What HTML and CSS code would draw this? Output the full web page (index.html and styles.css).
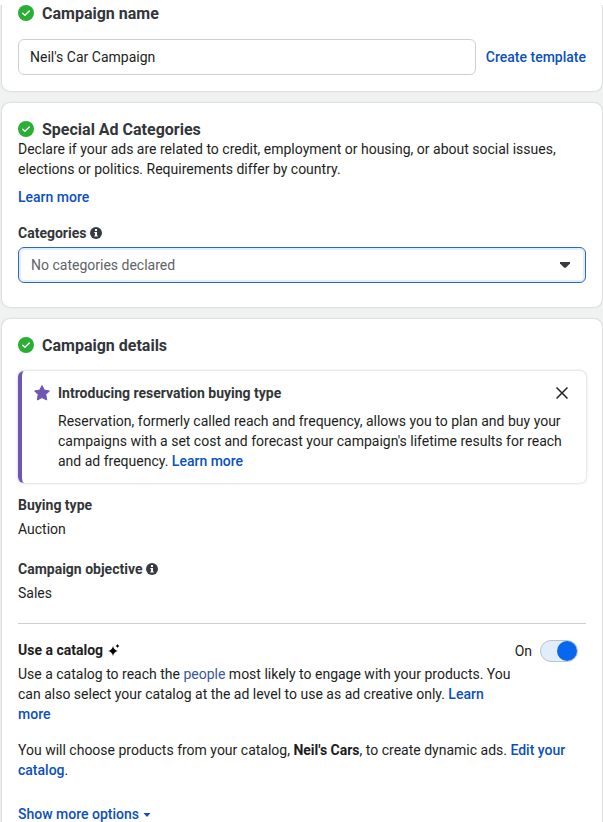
FILE: index.html
```html
<!DOCTYPE html>
<html lang="en">
<head>
<meta charset="utf-8">
<meta name="viewport" content="width=device-width, initial-scale=1">
<title>Campaign setup</title>
<link rel="stylesheet" href="styles.css">
</head>
<body>
<svg class="sprite" aria-hidden="true">
  <symbol id="check" viewBox="0 0 16 16">
    <circle cx="8" cy="8" r="8" fill="#2aae34"/>
    <path d="M4.700 8.200 6.900 10.200 11.300 5.900" fill="none" stroke="#fff" stroke-width="1.400" stroke-linecap="round" stroke-linejoin="round"/>
  </symbol>
  <symbol id="info" viewBox="0 0 12 12">
    <circle cx="6" cy="6" r="6" fill="#373b41"/>
    <path d="M5 2h2v2H5zM4.300 4.900H7v3.500h.8v1.100H4.300V8.400H5V6h-.7z" fill="#fff"/>
  </symbol>
</svg>
<main class="page">
  <section class="card card-first">
    <h2 class="heading"><svg class="check"><use href="#check"/></svg><label for="name">Campaign name</label></h2>
    <div class="name-row">
      <input class="field" id="name" type="text" value="Neil's Car Campaign">
      <a class="link" href="#">Create template</a>
    </div>
  </section>

  <section class="card card-categories">
    <h2 class="heading"><svg class="check"><use href="#check"/></svg><span>Special Ad Categories</span></h2>
    <p>Declare if your ads are related to credit, employment or housing, or about social issues, elections or politics. Requirements differ by country.</p>
    <p class="learn"><a class="link" href="#">Learn more</a></p>
    <label class="label" for="categories">Categories <svg class="info"><use href="#info"/></svg></label>
    <div class="select">
      <select class="field" id="categories"><option>No categories declared</option></select>
      <svg class="select-arrow" viewBox="0 0 12 8"><path d="M1 1h10v1.500L7 6.600Q6 7.400 5 6.600L1 2.500z" fill="#373b41"/></svg>
    </div>
  </section>

  <section class="card">
    <h2 class="heading"><svg class="check"><use href="#check"/></svg><span>Campaign details</span></h2>
    <aside class="banner">
      <svg class="star" viewBox="0 0 16 16"><path d="M8 .6 10.300 5.100 15.400 5.900 11.800 9.600 12.700 15 8 12.600 3.300 15 4.200 9.600.6 5.900 5.700 5.100z" fill="#6f56b5" stroke="#6f56b5" stroke-linejoin="round"/></svg>
      <div class="banner-body">
        <h3 class="label">Introducing reservation buying type</h3>
        <p>Reservation, formerly called reach and frequency, allows you to plan and buy your campaigns with a set cost and forecast your campaign's lifetime results for reach and ad frequency. <a class="link" href="#">Learn more</a></p>
      </div>
      <button class="close" type="button" aria-label="Close"><svg viewBox="0 0 12 12"><path d="M.5.5l11 11m0-11-11 11" fill="none" stroke="#222" stroke-width="1.500"/></svg></button>
    </aside>
    <dl class="details">
      <div><dt class="label">Buying type</dt><dd>Auction</dd></div>
      <div><dt class="label">Campaign objective <svg class="info"><use href="#info"/></svg></dt><dd>Sales</dd></div>
    </dl>
    <div class="catalog">
      <div class="catalog-text">
        <h3 class="label dark">Use a catalog <svg class="spark" viewBox="0 0 12 12"><path d="M5 2Q5.800 6.200 10 7 5.800 7.800 5 12 4.200 7.800 0 7 4.200 6.200 5 2zM9.500 0Q9.800 1.700 11.500 2 9.800 2.300 9.500 4 9.200 2.300 7.500 2 9.200 1.700 9.500 0z" fill="#000"/></svg></h3>
        <p>Use a catalog to reach the <a class="people" href="#">people</a> most likely to engage with your products. You can also select your catalog at the ad level to use as ad creative only. <a class="link" href="#">Learn more</a></p>
      </div>
      <label class="toggle">On <input class="switch" type="checkbox" role="switch" checked></label>
    </div>
    <p class="products">You will choose products from your catalog, <strong>Neil's Cars</strong>, to create dynamic ads. <a class="link" href="#">Edit your catalog</a>.</p>
    <button class="more link" type="button">Show more options <svg class="caret" viewBox="0 0 8 4"><path d="M.5 0h7L4 4z" fill="currentColor"/></svg></button>
  </section>
</main>
</body>
</html>
```
FILE: styles.css
```css
* { box-sizing: border-box; }

body {
  margin: 0;
  background: #f0f1f1;
  color: #1c1e21;
  font: 14px/20px Roboto, "Liberation Sans", sans-serif;
}

/* lower edge of the header that the form scrolls under */
body::before {
  content: "";
  position: absolute;
  top: 0;
  left: 0;
  right: 0;
  height: 5px;
  background: #fff;
}

h2, h3, p, dl, dd { margin: 0; }
.sprite { display: none; }

.page {
  display: flex;
  flex-direction: column;
  gap: 12px;
  padding: 0 1px 0 2px;
}

.card {
  padding: 16px 16px 0;
  background: #fff;
  border-radius: 8px;
  box-shadow: 0 0 2px rgba(0, 0, 0, .25);
}
.card:last-child { border-radius: 8px 8px 0 0; }
.card-first {
  padding: 3px 16px 16px;
  border-radius: 0 0 8px 8px;
}
.card-categories { padding-bottom: 24px; }

.heading {
  display: flex;
  align-items: center;
  gap: 8px;
  height: 20px;
  font-size: 16px;
  font-weight: 700;
  line-height: 22px;
  color: #333639;
}
.heading > :last-child { padding-top: 2px; }
.check { width: 16px; height: 16px; }

.label {
  display: block;
  font-size: 14px;
  font-weight: 700;
  color: #333639;
}
.dark { color: #1c1e21; }
.info { width: 12px; height: 12px; vertical-align: -1px; }

.link { color: #0a50be; font-weight: 500; text-decoration: none; }
.people { color: #385898; text-decoration: none; }

.field {
  width: 100%;
  height: 36px;
  padding: 0 12px;
  border: 1px solid #ccd0d5;
  border-radius: 6px;
  background: #fff;
  color: #1c1e21;
  font: inherit;
}
.name-row {
  display: flex;
  align-items: center;
  gap: 10px;
  margin-top: 16px;
}
.name-row .field { flex: 1; min-width: 0; padding: 0 11px; }
.name-row .link { white-space: nowrap; }

.learn { margin: 8px 0 16px; }
.select { position: relative; margin-top: 4px; }
.select .field {
  display: block;
  appearance: none;
  border-color: #3065c5;
  box-shadow: inset 0 0 0 2px #e0edfb;
  color: #606367;
}
.select-arrow {
  position: absolute;
  right: 15px;
  top: 14px;
  width: 12px;
  height: 8px;
  pointer-events: none;
}

.banner {
  display: flex;
  gap: 8px;
  margin: 16px 0 12px;
  padding: 12px 18px 12px 12px;
  border-left: 4px solid #6f56b5;
  border-radius: 6px;
  box-shadow: 0 0 3px rgba(0, 0, 0, .25);
}
.star { flex: none; width: 16px; height: 16px; margin-top: 2px; }
.banner-body { flex: 1; }
.banner-body p { margin-top: 8px; }
.close {
  align-self: flex-start;
  display: flex;
  align-items: center;
  width: 12px;
  height: 20px;
  margin-left: -20px;
  padding: 0;
  border: 0;
  background: none;
}
.close svg { width: 12px; height: 12px; }

.details { display: grid; gap: 20px; }
.details dd { margin-top: 4px; }

.catalog {
  display: flex;
  align-items: flex-start;
  gap: 4px;
  margin-top: 20px;
  padding: 16px 8px 0 0;
  border-top: 1px solid #ccd0d5;
}
.catalog-text { flex: 1; }
.catalog-text p { margin-top: 4px; }
.spark { width: 12px; height: 12px; margin-left: 1px; vertical-align: -1px; }

.toggle { display: flex; align-items: center; gap: 8px; }
.switch {
  appearance: none;
  display: flex;
  justify-content: flex-end;
  width: 38px;
  height: 22px;
  margin: 0;
  border: 1px solid #b8c4d2;
  border-radius: 11px;
  background: #e1edf8;
}
.switch::before {
  content: "";
  width: 20px;
  height: 20px;
  border-radius: 50%;
  background: #0768ed;
}

.products { margin-top: 16px; }
.more {
  display: block;
  margin-top: 24px;
  padding: 0;
  border: 0;
  background: none;
  font: inherit;
  font-weight: 500;
}
.caret { width: 8px; height: 4px; margin-left: 1px; vertical-align: 2px; }
```
